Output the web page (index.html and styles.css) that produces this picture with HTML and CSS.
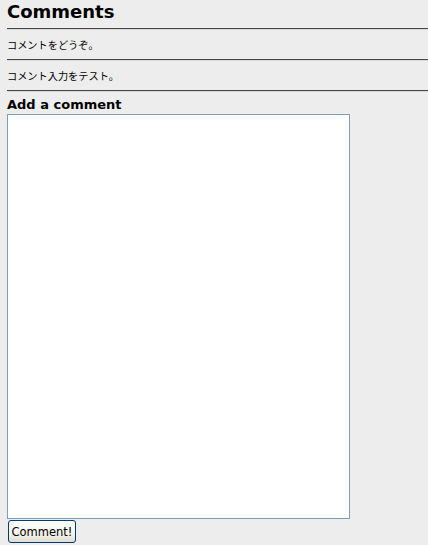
FILE: index.html
```html
<!DOCTYPE html>
<html lang="ja">
<head>
<meta charset="utf-8">
<title>Comments</title>
<link rel="stylesheet" href="styles.css">
</head>
<body>
<div class="page">
  <h2 class="title">Comments</h2>
  <div class="rule"></div>
  <div class="comment">コメントをどうぞ。</div>
  <div class="rule"></div>
  <div class="comment">コメント入力をテスト。</div>
  <div class="rule"></div>
  <form class="form">
    <label class="label" for="c">Add a comment</label>
    <textarea id="c" class="input"></textarea>
    <button type="button" class="btn">Comment!</button>
  </form>
</div>
</body>
</html>
```
FILE: styles.css
```css
html, body {
  margin: 0;
  padding: 0;
  background: #ededed;
}
.page {
  padding-left: 7px;
  font-family: "DejaVu Sans", Verdana, sans-serif;
  color: #000;
}
.title {
  margin: 0;
  padding-top: 1px;
  height: 28px;
  box-sizing: border-box;
  font-size: 18px;
  line-height: 22px;
  font-weight: bold;
}
.rule {
  height: 1px;
  border-top: 1px solid #454545;
  background: #d8d8d8;
}
.comment {
  height: 29px;
  display: flex;
  align-items: center;
  font-family: "Noto Sans CJK JP", sans-serif;
  font-size: 10.2px;
  color: #000;
}
.form {
  margin: 0;
}
.label {
  display: block;
  padding-top: 4px;
  line-height: 18px;
  font-size: 13px;
  font-weight: bold;
}
.input {
  display: block;
  margin: 0;
  width: 343px;
  height: 405px;
  box-sizing: border-box;
  border: 1px solid #7f9db9;
  background: #fff;
  resize: none;
  padding: 2px;
}
.btn {
  display: block;
  margin: 1px 0 0 1px;
  width: 68px;
  height: 23px;
  box-sizing: border-box;
  padding: 0;
  border: 1px solid #003c74;
  border-radius: 3px;
  background: linear-gradient(#ffffff, #f4f3ee 60%, #e0ddd0);
  font-family: "DejaVu Sans", Verdana, sans-serif;
  font-size: 11.5px;
  color: #000;
}
```
